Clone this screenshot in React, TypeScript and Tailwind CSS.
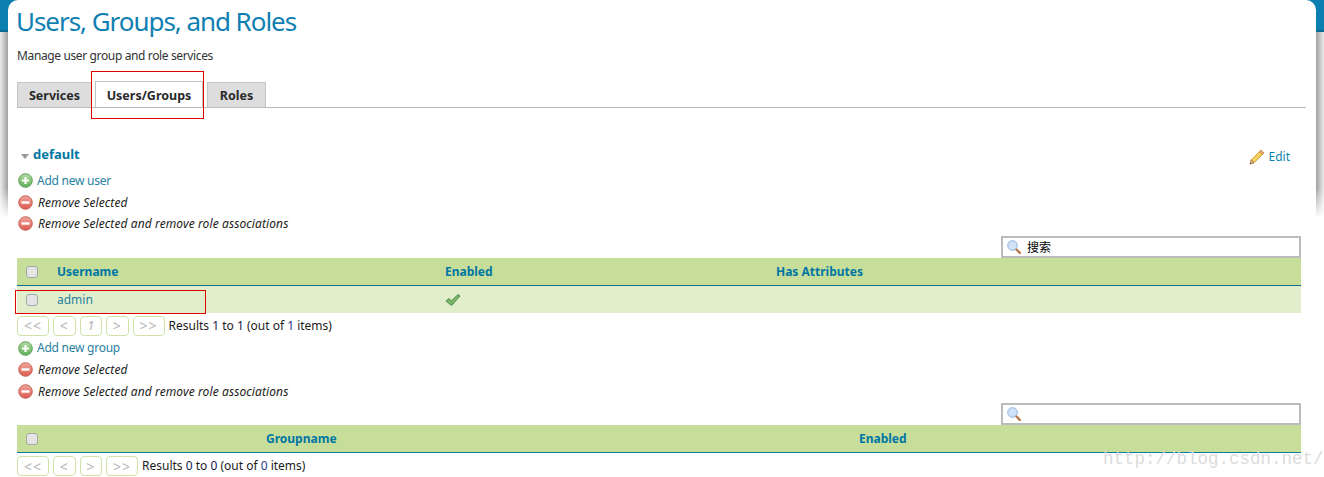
const ink = "#0076a3";

const GreenPlus = () => (
  <svg width="15" height="15" viewBox="0 0 15 15" className="shrink-0">
    <defs>
      <linearGradient id="gp" x1="0" y1="0" x2="0" y2="1">
        <stop offset="0" stopColor="#b5dca0" />
        <stop offset="1" stopColor="#5fb05a" />
      </linearGradient>
    </defs>
    <circle cx="7.5" cy="7.5" r="6.8" fill="url(#gp)" stroke="#5c9e58" strokeWidth="1" />
    <path d="M7.5 4v7M4 7.500h7" stroke="#fff" strokeWidth="2.200" />
  </svg>
);

const RedMinus = () => (
  <svg width="15" height="15" viewBox="0 0 15 15" className="shrink-0">
    <defs>
      <linearGradient id="rm" x1="0" y1="0" x2="0" y2="1">
        <stop offset="0" stopColor="#f0a59b" />
        <stop offset="1" stopColor="#dd5a50" />
      </linearGradient>
    </defs>
    <circle cx="7.5" cy="7.5" r="6.8" fill="url(#rm)" stroke="#c9655c" strokeWidth="1" />
    <path d="M3.500 7.500h8" stroke="#fff" strokeWidth="2.400" />
  </svg>
);

const Pencil = () => (
  <svg width="16" height="16" viewBox="0 0 16 16" className="shrink-0">
    <path d="M12 1.200 14.800 4 5 13.800 2.200 11z" fill="#f6d55c" stroke="#d2913f" strokeWidth="1" />
    <path d="M12 1.200 14.800 4 13.300 5.500 10.500 2.700z" fill="#eeb088" stroke="#c98a4f" strokeWidth="1" />
    <path d="M2.200 11 5 13.800 1 15z" fill="#e8c79a" stroke="#8a5a2b" strokeWidth="0.800" />
    <path d="M1 15l1-.3-.7-.7z" fill="#5a3a1a" />
  </svg>
);

const Glass = () => (
  <svg width="14" height="14" viewBox="0 0 14 14" className="shrink-0">
    <circle cx="5.500" cy="5.500" r="4.800" fill="#cfe2f7" stroke="#8fb4dc" strokeWidth="1" />
    <path d="M9.500 9.500 12.800 12.800" stroke="#b9794a" strokeWidth="2.400" strokeLinecap="round" />
  </svg>
);

const Check = () => (
  <svg width="16" height="14" viewBox="0 0 16 14">
    <path d="M1 8 4 5.500 6.300 8 13 1.500 15 3 6.500 12.500z" fill="#7cb86a" stroke="#4f8a4a" strokeWidth="1" />
  </svg>
);

const Box = () => (
  <span className="block h-3 w-3 rounded-[3px] border border-[#a8a8a8] bg-[#e4e4e4]" />
);

const ActionRow = ({ kind, label }: { kind: "add" | "remove"; label: string }) => (
  <div className="flex h-[21.500px] items-center gap-[5px] pl-px">
    {kind === "add" ? <GreenPlus /> : <RedMinus />}
    {kind === "add" ? (
      <span className="-ml-px tracking-[-0.25px] text-[#2a7f9f]">{label}</span>
    ) : (
      <span className="pt-px tracking-[0.1px] text-[#1c1c1c] italic">{label}</span>
    )}
  </div>
);

const SearchBox = ({ text }: { text?: string }) => (
  <div className="flex justify-end pr-[15px]">
    <div className="flex h-[22px] w-[300px] items-center gap-[6px] border-2 border-[#bbbbbb] bg-white pl-[4px] text-[12px] text-black">
      <Glass />
      {text ? (
        <span className="font-['Noto_Sans_CJK_SC',sans-serif]">{text}</span>
      ) : null}
    </div>
  </div>
);

const pagerWidth = (label: string) =>
  label.length === 2 ? "w-[32px]" : "w-[22.500px]";

const Pager = ({ labels, first, last, total }: { labels: string[]; first: number; last: number; total: number }) => (
  <div className="flex h-[22px] items-center gap-[4px]">
    {labels.map((label, i) => (
      <span
        key={i}
        className={`flex h-[20px] items-center justify-center rounded-[4px] border-[1.500px] border-[#cfe3ab] text-[14px] text-[#b5b5b5] ${pagerWidth(label)}`}
      >
        <span className={label === "1" ? "text-[13px] italic" : "tracking-[1px]"}>{label}</span>
      </span>
    ))}
    <span className="text-[#1c1c1c]">
      Results <span className="text-[#1a1a4e]">{first}</span> to <span className="text-[#1a1a4e]">{last}</span> (out of{" "}
      <span className="text-[#1d3a8a]">{total}</span> items)
    </span>
  </div>
);

const Gutter = ({ side }: { side: "left" | "right" }) => (
  <div className="flex w-[8px] shrink-0 flex-col">
    <div className="h-[32px]" />
    <div
      className={
        side === "left"
          ? "h-[186px] bg-linear-to-r from-[#ececec] to-[#a0a0a0]"
          : "h-[186px] bg-linear-to-l from-[#ececec] to-[#a0a0a0]"
      }
    >
      <div className="mt-[156px] h-[30px] bg-linear-to-b from-transparent to-white" />
    </div>
  </div>
);

export default function App() {
  return (
    <div className="relative flex h-[477px] w-[1324px] justify-between overflow-hidden bg-white bg-[linear-gradient(#0b7fb0_30px,#0a6c96_30px,#0a6c96_32px,white_32px)] font-['Noto_Sans',sans-serif] text-[12px]">
      <Gutter side="left" />
      <main className="w-[1308px] rounded-t-[10px] bg-white pl-[9px]">
        <h1 className="-ml-px h-[43px] pt-[3px] text-[26px] leading-[36px] tracking-[-1.050px] text-[#0f7fb3]">
          Users, Groups, and Roles
        </h1>
        <p className="h-[25px] pt-[4px] leading-[18px] tracking-[-0.37px] text-[#333]">Manage user group and role services</p>

        <div className="mt-[14px] flex h-[26px] w-[1289px] items-end gap-[3px] border-b border-[#bbbbbb] text-[12.500px] font-bold text-[#2a2a2a]">
          <span className="flex h-[25px] w-[75px] items-center justify-center border border-b-0 border-[#c4c4c4] bg-[#dddddd] pt-[2px]">
            Services
          </span>
          <span className="flex h-[26px] w-[108px] items-center justify-center border border-b-0 border-[#c4c4c4] bg-white pt-[4px]">
            Users/Groups
          </span>
          <span className="ml-px flex h-[25px] w-[59px] items-center justify-center border border-b-0 border-[#c4c4c4] bg-[#dddddd] pt-[2px]">
            Roles
          </span>
        </div>

        <div className="mt-[36px] flex h-[22px] items-center justify-between pr-[26px]">
          <div className="flex items-center gap-[4px] pl-[4px]">
            <span className="mt-[3px] h-0 w-0 border-x-[4px] border-t-[5px] border-x-transparent border-t-[#999]" />
            <span className="text-[13px] font-bold" style={{ color: ink }}>default</span>
          </div>
          <div className="mt-[4px] flex items-center gap-[4px] text-[#0b84ad]">
            <Pencil />
            <span>Edit</span>
          </div>
        </div>

        <div className="mt-[4px]">
          <ActionRow kind="add" label="Add new user" />
          <ActionRow kind="remove" label="Remove Selected" />
          <ActionRow kind="remove" label="Remove Selected and remove role associations" />
        </div>

        <div className="mt-[1px]">
          <SearchBox text="搜索" />
        </div>

        <div className="flex h-[28px] w-[1284px] items-center border-b border-[#0d6d8f] bg-[#c7de9b] pt-[2px] font-bold" style={{ color: ink }}>
          <span className="w-[40px] pl-[9px]"><Box /></span>
          <span className="w-[388px]">Username</span>
          <span className="w-[331px]">Enabled</span>
          <span>Has Attributes</span>
        </div>
        <div className="flex h-[27px] w-[1284px] items-center bg-[#e1eecb] pt-[1px]">
          <span className="w-[40px] pl-[9px]"><Box /></span>
          <span className="w-[388px] text-[#2a7f9f]">admin</span>
          <Check />
        </div>
        <div className="mt-[2px]">
          <Pager labels={["<<", "<", "1", ">", ">>"]} first={1} last={1} total={1} />
        </div>

        <div className="mt-[1px]">
          <ActionRow kind="add" label="Add new group" />
          <ActionRow kind="remove" label="Remove Selected" />
          <ActionRow kind="remove" label="Remove Selected and remove role associations" />
        </div>

        <div className="mt-[1px]">
          <SearchBox />
        </div>
        <div className="flex h-[28px] w-[1284px] items-center border-b border-[#0d7a9f] bg-[#c7de9b] font-bold" style={{ color: ink }}>
          <span className="w-[249px] pl-[9px]"><Box /></span>
          <span className="w-[593px]">Groupname</span>
          <span>Enabled</span>
        </div>
        <div className="mt-[2px]">
          <Pager labels={["<<", "<", ">", ">>"]} first={0} last={0} total={0} />
        </div>
      </main>
      <Gutter side="right" />

      {/* annotations drawn on top of the screenshot */}
      <div className="absolute top-[71px] left-[91px] h-[48px] w-[113px] border border-[#e00000]" />
      <div className="absolute top-[290px] left-[15px] h-[24px] w-[191px] border border-[#e00000]" />
      <span className="absolute top-[446px] left-[1103px] font-['Liberation_Mono',monospace] text-[17.500px] text-[#dcdcdc]">
        http://blog.csdn.net/
      </span>
    </div>
  );
}
